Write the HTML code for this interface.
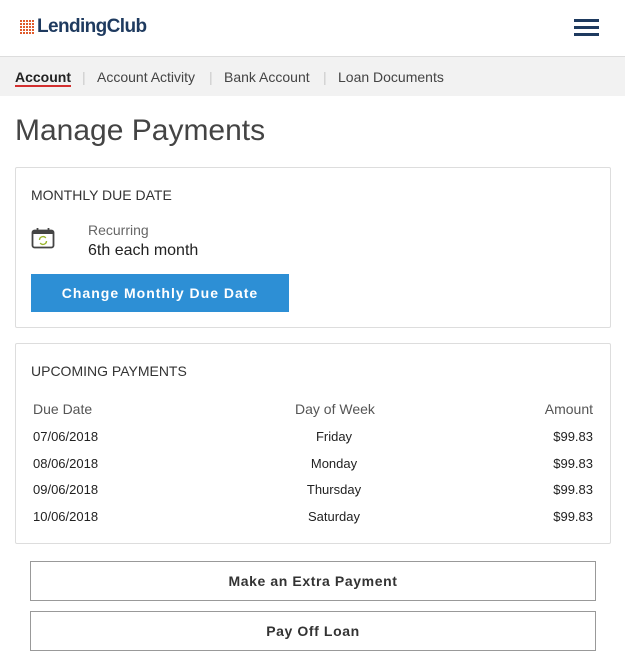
<!DOCTYPE html>
<html><head><style>
*{box-sizing:border-box;margin:0;padding:0}
body{width:625px;height:667px;background:#fff;font-family:"Liberation Sans",Arial,sans-serif;color:#222;position:relative;overflow:hidden}
.abs{position:absolute}
.card{position:absolute;left:15px;width:596px;border:1px solid #ddd;border-radius:2px}
.h{font-size:14px;color:#333;position:absolute;left:15px}
.row{position:absolute;font-size:13px;color:#222}
.btn2{position:absolute;left:30px;width:566px;height:40px;border:1px solid #999;text-align:center;line-height:38px;font-weight:bold;font-size:14px;letter-spacing:.6px;color:#333}
.g{position:absolute;left:20px;top:20px;width:14px;height:14px;display:grid;grid-template-columns:repeat(5,2px);grid-gap:1px}
.g i{display:block;width:2px;height:2px;background:#e05a2b}
</style></head><body>
<div class="g"><i></i><i></i><i></i><i></i><i></i><i></i><i></i><i></i><i></i><i></i><i></i><i></i><i></i><i></i><i></i><i></i><i></i><i></i><i></i><i></i><i></i><i></i><i></i><i></i><i></i></div>
<div class="abs" style="left:37px;top:16px;font-size:19px;font-weight:bold;color:#1e3a5f;letter-spacing:-.6px">LendingClub</div>
<div class="abs" style="left:574px;top:19px;width:25px;height:3px;background:#1e3a5f"></div>
<div class="abs" style="left:574px;top:26px;width:25px;height:3px;background:#1e3a5f"></div>
<div class="abs" style="left:574px;top:33px;width:25px;height:3px;background:#1e3a5f"></div>
<div class="abs" style="left:0;top:56px;width:625px;height:40px;background:#f2f2f2;border-top:1px solid #ddd"></div>
<div class="abs" style="left:15px;top:69px;font-size:14px;font-weight:bold;color:#222">Account</div>
<div class="abs" style="left:15px;top:85px;width:56px;height:2px;background:#d32f2f"></div>
<div class="abs" style="left:82px;top:69px;font-size:14px;color:#ccc">|</div>
<div class="abs" style="left:97px;top:69px;font-size:14px;color:#444">Account Activity</div>
<div class="abs" style="left:209px;top:69px;font-size:14px;color:#ccc">|</div>
<div class="abs" style="left:224px;top:69px;font-size:14px;color:#444">Bank Account</div>
<div class="abs" style="left:323px;top:69px;font-size:14px;color:#ccc">|</div>
<div class="abs" style="left:338px;top:69px;font-size:14px;color:#444">Loan Documents</div>
<div class="abs" style="left:15px;top:114px;font-size:30px;color:#444">Manage Payments</div>
<div class="card" style="top:167px;height:161px">
<div class="h" style="top:19px">MONTHLY DUE DATE</div>
<svg class="abs" style="left:15px;top:59px" width="24" height="22" viewBox="0 0 24 22"><rect x="1.5" y="3.5" width="21" height="17" rx="2" fill="none" stroke="#444" stroke-width="1.8"/><rect x="1.5" y="3.5" width="21" height="3.5" fill="#444"/><line x1="6.5" y1="1" x2="6.5" y2="6" stroke="#444" stroke-width="1.8"/><line x1="17.5" y1="1" x2="17.5" y2="6" stroke="#444" stroke-width="1.8"/><path d="M8.5 13a3.5 3.5 0 0 1 6.3-2M15.5 14a3.5 3.5 0 0 1-6.3 2" fill="none" stroke="#9ab52c" stroke-width="1.4"/></svg>
<div class="abs" style="left:72px;top:54px;font-size:14px;color:#666">Recurring</div>
<div class="abs" style="left:72px;top:74px;font-size:16px;color:#222">6th each month</div>
<div class="abs" style="left:15px;top:106px;width:258px;height:38px;background:#2d8fd5;color:#fff;font-weight:bold;font-size:14px;letter-spacing:1px;text-align:center;line-height:38px">Change Monthly Due Date</div>
</div>
<div class="card" style="top:343px;height:201px">
<div class="h" style="top:19px">UPCOMING PAYMENTS</div>
<div class="row" style="left:17px;top:57px;font-size:14px;color:#555">Due Date</div>
<div class="row" style="left:279px;top:57px;font-size:14px;color:#555">Day of Week</div>
<div class="row" style="right:17px;top:57px;font-size:14px;color:#555">Amount</div>
<div class="row" style="left:17px;top:85px">07/06/2018</div><div class="row" style="left:0;width:636px;text-align:center;top:85px">Friday</div><div class="row" style="right:17px;top:85px">$99.83</div>
<div class="row" style="left:17px;top:112px">08/06/2018</div><div class="row" style="left:0;width:636px;text-align:center;top:112px">Monday</div><div class="row" style="right:17px;top:112px">$99.83</div>
<div class="row" style="left:17px;top:138px">09/06/2018</div><div class="row" style="left:0;width:636px;text-align:center;top:138px">Thursday</div><div class="row" style="right:17px;top:138px">$99.83</div>
<div class="row" style="left:17px;top:165px">10/06/2018</div><div class="row" style="left:0;width:636px;text-align:center;top:165px">Saturday</div><div class="row" style="right:17px;top:165px">$99.83</div>
</div>
<div class="btn2" style="top:561px">Make an Extra Payment</div>
<div class="btn2" style="top:611px">Pay Off Loan</div>
</body></html>
